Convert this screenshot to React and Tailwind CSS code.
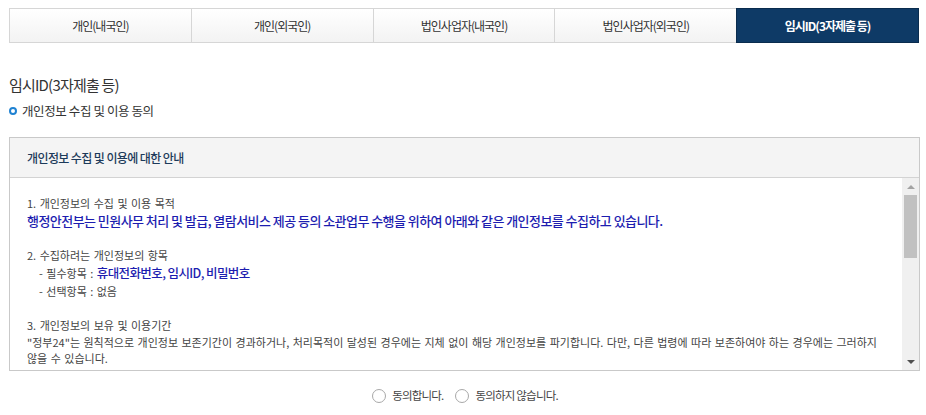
import React from "react";

const tabs = ["개인(내국인)", "개인(외국인)", "법인사업자(내국인)", "법인사업자(외국인)", "임시ID(3자제출 등)"];

export default function App() {
  return (
    <div className="w-[926px] h-[415px] bg-white text-[#333] font-['Noto_Sans_CJK_KR','Noto_Sans',sans-serif] overflow-hidden">
      <div className="pt-[8px] pl-[9px] pr-[7px]">
        <div className="flex h-[35px] border border-[#d6d6d6]">
          {tabs.map((t, i) => {
            const active = i === tabs.length - 1;
            return (
              <div
                key={t}
                className={
                  active
                    ? "flex-1 flex items-center justify-center bg-[#0e3a66] text-white text-[12px] font-bold tracking-[-1px] outline outline-1 outline-[#0a2c4e]"
                    : "flex-1 flex items-center justify-center bg-gradient-to-b from-white to-[#f3f3f3] text-[#333] text-[12px] tracking-[-1px] border-r border-[#d6d6d6]"
                }
              >
                {t}
              </div>
            );
          })}
        </div>
      </div>

      <div className="px-[9px]">
        <div className="mt-[32px] h-[20px] leading-[20px] text-[15px] text-[#333] tracking-[-0.8px]">임시ID(3자제출 등)</div>
        <div className="mt-[6px] h-[20px] flex items-center gap-[5px]">
          <span className="w-[8px] h-[8px] rounded-full border-[2px] border-[#1f82d2] shrink-0"></span>
          <span className="text-[12.5px] leading-[20px] text-[#333] tracking-[-0.4px]">개인정보 수집 및 이용 동의</span>
        </div>

        <div className="mt-[16px] w-[911px] border border-[#c9c9c9]">
          <div className="h-[40px] bg-[#f4f4f4] border-b border-[#d3d3d3] flex items-center pl-[17px]">
            <span className="text-[12px] font-medium text-[#1c3a5a] tracking-[-0.6px]">개인정보 수집 및 이용에 대한 안내</span>
          </div>
          <div className="flex h-[192px]">
            <div className="flex-1 pl-[17px] pr-[10px] pt-[16px] text-[11px] text-[#444] tracking-[0px] [word-spacing:1px]">
              <div className="leading-[18px]">1. 개인정보의 수집 및 이용 목적</div>
              <div className="leading-[18px] text-[13px] font-medium text-[#1d1db0] tracking-[-0.55px] [word-spacing:0px]">
                행정안전부는 민원사무 처리 및 발급, 열람서비스 제공 등의 소관업무 수행을 위하여 아래와 같은 개인정보를 수집하고 있습니다.
              </div>
              <div className="mt-[16px] leading-[18px]">2. 수집하려는 개인정보의 항목</div>
              <div className="leading-[18px] pl-[12px]">
                - 필수항목 : <span className="text-[12.5px] font-medium text-[#1d1db0] tracking-[-0.6px] [word-spacing:0px]">휴대전화번호, 임시ID, 비밀번호</span>
              </div>
              <div className="leading-[18px] pl-[12px]">- 선택항목 : 없음</div>
              <div className="mt-[16px] leading-[18px]">3. 개인정보의 보유 및 이용기간</div>
              <div className="leading-[16px]">
                "정부24"는 원칙적으로 개인정보 보존기간이 경과하거나, 처리목적이 달성된 경우에는 지체 없이 해당 개인정보를 파기합니다. 다만, 다른 법령에 따라 보존하여야 하는 경우에는 그러하지
                <br />
                않을 수 있습니다.
              </div>
            </div>
            <div className="w-[17px] bg-[#f0f0f0] flex flex-col items-center">
              <div className="h-[17px] flex items-center justify-center">
                <div className="w-0 h-0 border-l-[4px] border-r-[4px] border-b-[4px] border-l-transparent border-r-transparent border-b-[#a3a3a3]"></div>
              </div>
              <div className="w-[13px] h-[63px] bg-[#c1c1c1]"></div>
              <div className="flex-1"></div>
              <div className="h-[17px] flex items-center justify-center">
                <div className="w-0 h-0 border-l-[4px] border-r-[4px] border-t-[4px] border-l-transparent border-r-transparent border-t-[#505050]"></div>
              </div>
            </div>
          </div>
        </div>
      </div>

      <div className="mt-[15px] h-[20px] flex items-center justify-center gap-[6px] pl-[4px] text-[11.5px] text-[#444] tracking-[-0.8px]">
        <label className="flex items-center gap-[6px]">
          <span className="w-[14px] h-[14px] rounded-full border border-[#a8a8a8] bg-white"></span>
          <span>동의합니다.</span>
        </label>
        <label className="flex items-center gap-[6px] ml-[6px]">
          <span className="w-[14px] h-[14px] rounded-full border border-[#a8a8a8] bg-white"></span>
          <span>동의하지 않습니다.</span>
        </label>
      </div>
    </div>
  );
}
